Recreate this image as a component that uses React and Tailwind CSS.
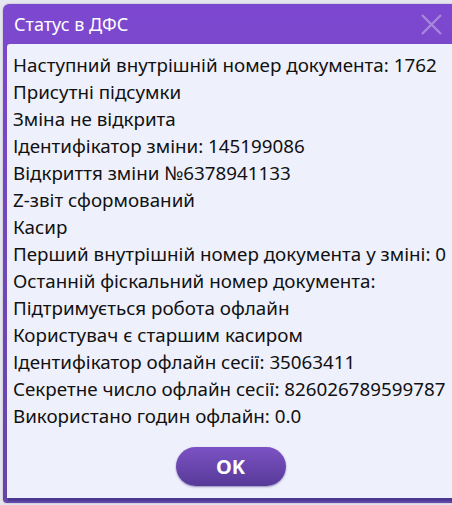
import React from "react";

const lines = [
  "Наступний внутрішній номер документа: 1762",
  "Присутні підсумки",
  "Зміна не відкрита",
  "Ідентифікатор зміни: 145199086",
  "Відкриття зміни №6378941133",
  "Z-звіт сформований",
  "Касир",
  "Перший внутрішній номер документа у зміні: 0",
  "Останній фіскальний номер документа:",
  "Підтримується робота офлайн",
  "Користувач є старшим касиром",
  "Ідентифікатор офлайн сесії: 35063411",
  "Секретне число офлайн сесії: 826026789599787",
  "Використано годин офлайн: 0.0",
];

export default function App() {
  return (
    <div
      className="w-[452px] h-[505px] overflow-hidden bg-[#e6e6ee] pt-[4px] pl-[3px]"
      style={{ fontFamily: '"Noto Sans", "Open Sans", sans-serif' }}
    >
      <div className="w-[460px] h-[499px] flex flex-col rounded-tl-[6px] rounded-bl-[4px] bg-gradient-to-b from-[#7d48d0] to-[#6446a6] pl-[4px] pb-[2px] shadow-[0_0_2px_rgba(80,60,140,0.4)]">
        <div className="h-[40px] flex items-center justify-between pl-[7px] pr-[20px] shrink-0">
          <span className="text-white text-[18px] leading-none">Статус в ДФС</span>
          <svg width="23" height="23" viewBox="0 0 23 23" className="opacity-55">
            <path d="M2 2 L21 21 M21 2 L2 21" stroke="#c9bde6" strokeWidth="2.4" />
          </svg>
        </div>
        <div className="flex-1 bg-[#eef0fc] rounded-tl-[3px] rounded-bl-[3px] border-b-[3px] border-[#4b3890] flex flex-col">
          <div className="pl-[6px] pt-[8px] flex flex-col">
            {lines.map((l) => (
              <div key={l} className="text-[18.8px] leading-[27px] text-[#111] whitespace-nowrap">
                {l}
              </div>
            ))}
          </div>
          <div className="w-[445px] flex justify-center mt-[17px]">
            <button className="w-[110px] h-[39px] rounded-full bg-gradient-to-b from-[#7c52c4] to-[#573a98] text-white font-bold text-[20px] shadow-[0_1px_2px_rgba(60,40,120,0.5)] ml-[2px]">
              OK
            </button>
          </div>
        </div>
      </div>
    </div>
  );
}
